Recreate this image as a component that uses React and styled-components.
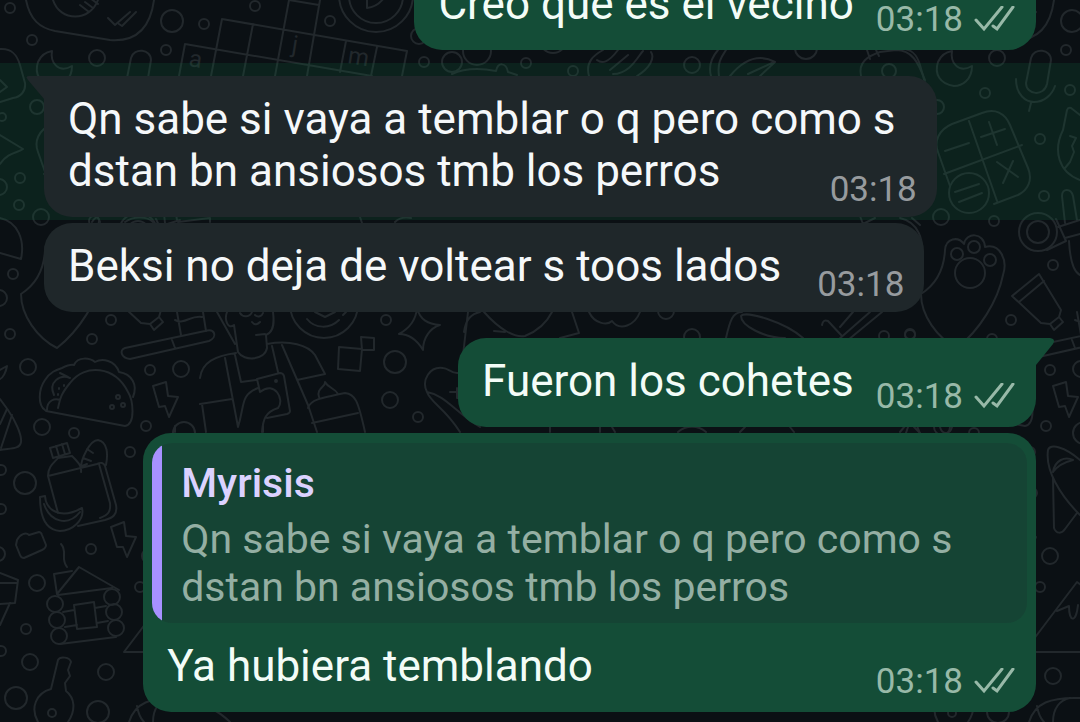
import React from 'react';
import styled, { createGlobalStyle, css } from 'styled-components';

const GlobalStyle = createGlobalStyle`
  * { box-sizing: border-box; }
  body {
    margin: 0;
    background: #0b1014;
    font-family: Roboto, 'Liberation Sans', sans-serif;
  }
`;

const Screen = styled.main`
  position: relative;
  isolation: isolate;
  height: 100vh;
  overflow: hidden;
  display: flex;
  flex-direction: column;
  justify-content: flex-end;
  padding-bottom: 7px;
`;

const Wallpaper = styled.svg`
  position: absolute;
  inset: 0;
  z-index: -1;
  width: 100%;
  height: 100%;
  fill: none;
  stroke: #22282c;
  stroke-width: 2;
  stroke-linecap: round;
  stroke-linejoin: round;

  text {
    fill: #22282c;
    stroke: none;
    font-size: 24px;
  }
`;

const Row = styled.article`
  flex: none;
  display: flex;
  justify-content: ${(p) => (p.$out ? 'flex-end' : 'flex-start')};
  padding: ${(p) => (p.$first ? '13px' : '3px')} 44px ${(p) => (p.$last ? '13px' : '3px')};
  background: ${(p) => (p.$highlight ? 'rgba(16, 98, 64, 0.22)' : 'transparent')};
`;

const BubbleBox = styled.div`
  position: relative;
  max-width: 90%;
  width: ${(p) => (p.$wide ? '90%' : 'auto')};
  border-radius: 28px;
  background: ${(p) => (p.$out ? '#144d37' : '#1f272a')};
  ${(p) =>
    p.$tail &&
    (p.$out
      ? css`border-top-right-radius: 0;`
      : css`border-top-left-radius: 0;`)}
`;

const Tail = styled.svg`
  position: absolute;
  top: 0;
  width: 18px;
  height: 28px;
  ${(p) => (p.$out ? css`left: 100%; fill: #144d37;` : css`right: 100%; fill: #1f272a;`)}
`;

const Body = styled.div`
  display: grid;
  grid-template-columns: ${(p) => (p.$stacked ? '1fr' : '1fr auto')};
  column-gap: ${(p) => (p.$out ? '22px' : '36px')};
  align-items: end;
  padding: 17px 20px 6px 24px;
`;

const Text = styled.p`
  grid-area: 1 / 1;
  margin: 0;
  padding-bottom: 14px;
  font-size: 44px;
  line-height: 52px;
  color: ${(p) => (p.$out ? '#f3fcf7' : '#f5f8fa')};
`;

const Line = styled.span`
  display: block;
  width: fit-content;
`;

const Meta = styled.div`
  grid-area: ${(p) => (p.$stacked ? '1 / 1' : '1 / 2')};
  justify-self: end;
  display: flex;
  align-items: center;
  gap: 11px;
  padding-bottom: ${(p) => (p.$out ? '3px' : '0')};
  font-size: 35px;
  line-height: 42px;
  color: ${(p) => (p.$out ? '#98b9a8' : '#979b9e')};
`;

const TickIcon = styled.svg`
  width: 42px;
  height: 28px;
  fill: none;
  stroke: currentColor;
  stroke-width: 3;
  stroke-linecap: round;
`;

const Quote = styled.blockquote`
  margin: 0 9px;
  border-radius: 20px;
  overflow: hidden;
  background: linear-gradient(to right, #a791ff 10px, #154434 10px);
  padding: 16px 20px 12px 29px;
`;

const QuoteWrap = styled.div`
  padding-top: 10px;
`;

const QuoteName = styled.cite`
  display: block;
  margin-bottom: 8px;
  font-style: normal;
  font-weight: 500;
  font-size: 41px;
  line-height: 48px;
  color: #dbd2ff;
`;

const QuoteText = styled.p`
  margin: 0;
  font-size: 41px;
  line-height: 48px;
  color: #94afa3;
`;

const tileCircles = [
  [10, 8, 5], [32, 40, 5], [172, 21, 11], [97, 58, 8], [166, 50, 5], [37, 107, 7], [2, 117, 4],
  [20, 178, 5], [-1, 187, 8], [19, 205, 5], [41, 217, 8], [85, 93, 5], [170, 90, 5], [140, 139, 5],
  [144, 196, 5], [94, 221, 5], [13, 274, 5], [-1, 298, 8], [10, 334, 5], [28, 367, 8], [92, 339, 5],
  [111, 320, 5], [150, 370, 5], [181, 369, 8], [42, 427, 8], [74, 433, 5], [146, 426, 5],
  [184, 433, 11], [130, 452, 5], [25, 483, 11], [132, 493, 5], [1, 470, 5], [1, 509, 5], [-2, 554, 7],
  [91, 549, 5], [37, 583, 8], [26, 629, 5], [1, 651, 5], [30, 662, 8], [16, 698, 11], [106, 672, 8],
  [98, 712, 11], [140, 587, 5], [153, 676, 8], [150, 556, 8], [153, 265, 5],
  [57, 254, 6], [74, 247, 6], [90, 260, 6], [70, 273, 15], [138, 232, 19], [138, 232, 11],
  [69, 193, 20], [55, 604, 8], [112, 597, 8], [57, 620, 8], [114, 612, 8], [59, 636, 8],
  [116, 628, 8], [52, 713, 4], [118, 397, 2], [112, 407, 2], [123, 405, 2],
];

const tilePaths = [
  // phone with ticks
  'M26 0C30 20 40 28 55 31L110 40C135 42 150 30 154 0M53 0C60 22 90 22 98 0M108 18l7 7 15-13M119 24l3 2 14-14M80 5l9 7M85 2l8 6M90-2l8 6',
  // play card
  'M0 49C12 48 17 55 20 65L25 83C26 92 20 97 13 98L0 102M0 80L7 87 0 92',
  // moon
  'M52 51C50 62 58 74 72 66C72 80 62 86 54 86C40 84 34 74 38 62C41 55 46 52 52 51Z',
  // microphone
  'M131 58C134 47 151 49 151 60L147 84C144 97 126 95 126 83ZM116 79C116 95 126 102 134 102C144 102 152 95 155 86M131 103L129 111',
  'M0 135L23 149C18 153 8 152 0 164',
  // calculator
  'M52 124L82 113C95 108 105 113 110 125L128 168C133 180 128 190 118 195L94 204M52 124C38 130 34 142 38 152L50 186M69 121L97 201M44 174L122 145M45 151L69 143M81 137L105 129M89 122L97 145M97 162L118 177M113 161L103 183M55 192L79 184M59 202L82 193',
  // ornament
  'M180 115L171 108Q168 107 167 110L163 130C153 150 158 172 180 180M170 136l6 2-4 8 2 6-4 10-5 6',
  'M162 196C162 188 171 188 173 196L177 220M162 196L165 223M156 219L166 241 147 250M158 227L180 220M165 238L180 234M169 241C170 260 174 272 180 275',
  // paw
  'M21 294C35 285 44 270 45 250C46 238 58 236 64 244C66 232 84 232 85 247C100 243 108 260 103 275C98 300 80 330 57 348C37 338 21 315 21 294',
  // tube of paint
  'M139 274L112 296 141 323 150 324 159 317 161 310ZM144 281L119 302M150 324L154 330 163 322 159 317',
  // rolling pin
  'M125 348L205 331C215 328 218 337 209 341L130 359C121 358 119 350 125 348ZM172 340l3 8',
  'M0 218C18 222 25 240 21 259L0 253',
  // cake
  'M177 312L181 335M203 312L206 331M175 320C185 325 190 315 202 317',
  // taco
  'M45 410C38 405 38 390 45 380C50 372 56 370 62 368C66 366 70 364 74 365C78 356 90 358 95 362C102 358 115 360 119 372C132 374 138 385 133 397M46 411L125 426C136 424 133 400 128 392C115 366 85 363 70 383C60 395 60 400 58 408M54 395C48 382 60 374 70 378M47 410C47 400 55 398 60 400M59 388v1M64 385v1M58 394v1M60 373l8 4',
  // bolts
  'M153 386L166 382 168 396 178 397 169 417 165 406 159 407ZM111 527L124 522 126 536 136 537 127 557 123 547 117 547Z',
  // leaf and pizza
  'M0 370L7 366C6 372 3 378 0 379M0 399L8 410C15 420 22 435 21 442C20 450 8 448 0 450M12 415L1 448M7 409L0 424',
  // jar and carrot
  'M50 448L67 443 70 453 53 458ZM56 446l3 10M62 444l3 10M48 476C48 466 55 462 58 458L72 456C78 462 82 466 81 472M48 476L97 464Q103 461 105 466L116 505C118 515 112 518 105 520L78 526M48 476L58 513M99 464L110 503C111 512 108 515 100 518M81 470C80 460 90 440 98 440C108 442 108 455 106 465M83 458L91 461M87 449L93 453M82 466l5-2',
  // banana
  'M40 497L45 496C46 510 60 520 82 508C85 520 72 531 60 531C45 530 40 515 40 497ZM44 504C50 522 68 527 80 512',
  'M17 540C20 534 26 532 29 535L39 532Q41 532 42 535L46 545C46 548 44 549 42 550L24 558Q21 558 20 555L16 545Z',
  // log cabin
  'M57 594L79 567 119 590M57 594L54 574 72 571M58 595L112 588M63 612l11-2M65 627l12-2M60 644L116 637M95 608l11-2M97 623l11-2M74 605L94 602 97 627 77 629ZM61 544C68 552 60 558 67 567',
  // cup
  'M0 573L18 580 15 603 0 604M0 583L17 583M10 603L0 625',
  // key
  'M51 689L58 660C60 656 70 657 71 662L68 670 70 676 65 683 66 691C75 698 76 710 68 722M51 689C36 693 30 708 38 722',
  // mountain
  'M124 652L177 582 200 600M124 652H250M157 611L169 606C169 622 176 624 178 605',
  // rocket
  'M180 460C165 447 150 443 148 450C145 470 160 495 180 515M153 472C155 460 165 456 173 460C165 462 158 465 153 472M153 478L154 528C156 534 162 534 165 529L177 513',
  // shell
  'M129 722C135 703 150 697 180 698M137 706C138 712 140 718 144 722M153 722C153 708 160 700 170 698M180 698C200 700 220 712 230 722',
];

const sceneCircles = [
  [204, 24, 5], [255, 6, 5], [330, 21, 5], [376, -5, 37], [376, -4, 27], [419, 36, 8], [424, 62, 5],
  [452, 62, 10], [477, 51, 14], [553, 40, 13], [526, 63, 5], [573, 71, 5], [692, 65, 8], [889, 71, 7],
  [806, 48, 11], [386, 320, 5], [395, 362, 11], [390, 400, 8], [418, 417, 5], [666, 311, 8],
  [692, 337, 8], [910, 335, 5], [884, 336, 5], [324, 304, 34], [276, 381, 1],
];

const scenePaths = [
  // crossword
  'M222 19L407 51M185 44L372 76M289 0L319 5M185 44L179 76M222 19L211 76M253 24L243 76M289 0L275 76M320 0L307 76M346 41L340 72M377 47L371 76M407 51L402 76',
  'M367-8V8Q377 7 384-2',
  // cap, hand, guitar
  'M452 74C465 68 480 68 496 71C498 62 506 62 508 72L517 75M589 76C585 62 594 55 603 50M597 60C602 64 608 63 618 50M610 70L628 55M613 74C630 74 638 56 643 51M637 76C650 68 655 58 651 52M711 76C708 65 712 57 718 50M719 76C717 62 722 56 726 50M730 76C745 58 760 54 775 62L760 76M748 74L772 63',
  // backpack
  'M861 76C858 62 868 56 880 52L896 50C912 50 918 62 925 80M867 50l3 9M876 50l3 6',
  // overlapping squares and sparkle
  'M339 347L362 349 360 371 338 369ZM361 337L374 338 374 350 362 350ZM417 308C420 320 428 324 440 325C430 328 423 338 423 350C417 340 410 334 399 334C410 328 416 320 417 308Z',
  'M307 319C315 329 330 329 339 320M315 312L325 317 335 312M343 315l3-3',
  // man with a phone
  'M227 312C224 320 228 330 234 325L238 352C244 362 265 360 267 348L266 335C275 332 274 320 273 312M240 313c3 5 10 4 12-1M255 315c3 3 7 1 8-2M252 322c3 4 6 2 8 0M256 335l9-1M217 312L235 344M200 378C202 362 215 356 236 353M267 344C290 340 308 345 315 355L325 374 297 380M225 358L238 427C245 405 240 395 258 388M200 404L232 399M202 404L206 432M235 355L241 382 256 380M272 346L278 372M282 345L308 405 317 432M257 379L280 373Q283 373 284 376L290 411Q290 413 287 414L267 418M257 379L260 392C275 380 285 400 278 408C265 412 263 420 262 432',
  // burner
  'M308 408C310 400 320 398 345 393C355 394 358 400 365 432M312 423L358 413M319 397C316 388 326 387 325 382C328 388 335 388 338 394',
  // dinosaur, horse
  'M458 373C452 374 448 368 443 368C430 366 421 380 427 392C430 402 445 408 460 432M427 392C445 395 455 412 480 427M450 392h12M457 388v10M468 312L458 398M464 332C466 318 472 314 480 312M484 312C500 330 515 338 525 336C540 330 548 320 552 312M494 331L505 332M572 312L579 333 560 338M589 312C595 325 608 325 612 321C620 332 635 325 640 312',
  // mug
  'M726 338C730 320 733 312 742 312M741 316C745 310 785 322 803 338M741 316C741 326 765 338 785 338',
  'M822 325Q823 319 828 321L842 336M840 327L853 312M838 340L870 312M848 340L882 312M860 216l3 8 12-6M912 218l8 7',
  'M92 222c4-6 6-6 8 0M125 222c8-6 22-6 28 0M178 222l32-4v4M360 217l2 6M395 222c4-4 10-5 16-4M175 432v-6M263 432v-6M550 432v-6M600 432v-6M612 427l3 5M678 432c8-7 20-7 28 0M745 427l-5 5M790 427l4 5M900 432l5-6M914 427l6 6M940 427c2 8 10 8 12 0',
];

function Doodles({ circles, paths }) {
  return (
    <>
      {circles.map(([cx, cy, r], i) => (
        <circle key={i} cx={cx} cy={cy} r={r} />
      ))}
      {paths.map((d, i) => (
        <path key={i} d={d} />
      ))}
    </>
  );
}

function ChatWallpaper() {
  return (
    <Wallpaper aria-hidden="true">
      <g id="doodle-tile">
        <Doodles circles={tileCircles} paths={tilePaths} />
      </g>
      <use href="#doodle-tile" x="900" />
      <Doodles circles={sceneCircles} paths={scenePaths} />
      <text transform="translate(188 66) rotate(9)">a</text>
      <text transform="translate(291 52) rotate(9)">j</text>
      <text transform="translate(347 63) rotate(9)">m</text>
    </Wallpaper>
  );
}

function Ticks() {
  return (
    <TickIcon viewBox="0 0 42 28" role="img" aria-label="Entregado">
      <path d="M2 14L10 23 28 1M19 20L23 23 39 1" />
    </TickIcon>
  );
}

function Lines({ text }) {
  return text.split('\n').map((line) => <Line key={line}>{line}</Line>);
}

function Message({ out, first, last, tail, highlight, stacked, wide, quote, time, children }) {
  return (
    <Row $out={out} $first={first} $last={last} $highlight={highlight}>
      <BubbleBox $out={out} $tail={tail} $wide={wide}>
        {tail && (
          <Tail $out={out} viewBox="0 0 18 28" aria-hidden="true">
            <path d={out ? 'M0 0H14Q20 1 17 6L0 27Z' : 'M18 0H3Q-1 0 2 4L18 23Z'} />
          </Tail>
        )}
        {quote && (
          <QuoteWrap>
            <Quote>
              <QuoteName>{quote.name}</QuoteName>
              <QuoteText><Lines text={quote.text} /></QuoteText>
            </Quote>
          </QuoteWrap>
        )}
        <Body $out={out} $stacked={stacked}>
          <Text $out={out}><Lines text={children} /></Text>
          <Meta $out={out} $stacked={stacked}>
            <time dateTime={time}>{time}</time>
            {out && <Ticks />}
          </Meta>
        </Body>
      </BubbleBox>
    </Row>
  );
}

const QUAKE = 'Qn sabe si vaya a temblar o q pero como s\ndstan bn ansiosos tmb los perros';

export default function App() {
  return (
    <>
      <GlobalStyle />
      <Screen>
        <ChatWallpaper />
        <Message out last time="03:18">Creo que es el vecino</Message>
        <Message first tail highlight stacked wide time="03:18">{QUAKE}</Message>
        <Message last time="03:18">Beksi no deja de voltear s toos lados</Message>
        <Message out first tail time="03:18">Fueron los cohetes</Message>
        <Message out wide time="03:18" quote={{ name: 'Myrisis', text: QUAKE }}>
          Ya hubiera temblando
        </Message>
      </Screen>
    </>
  );
}
